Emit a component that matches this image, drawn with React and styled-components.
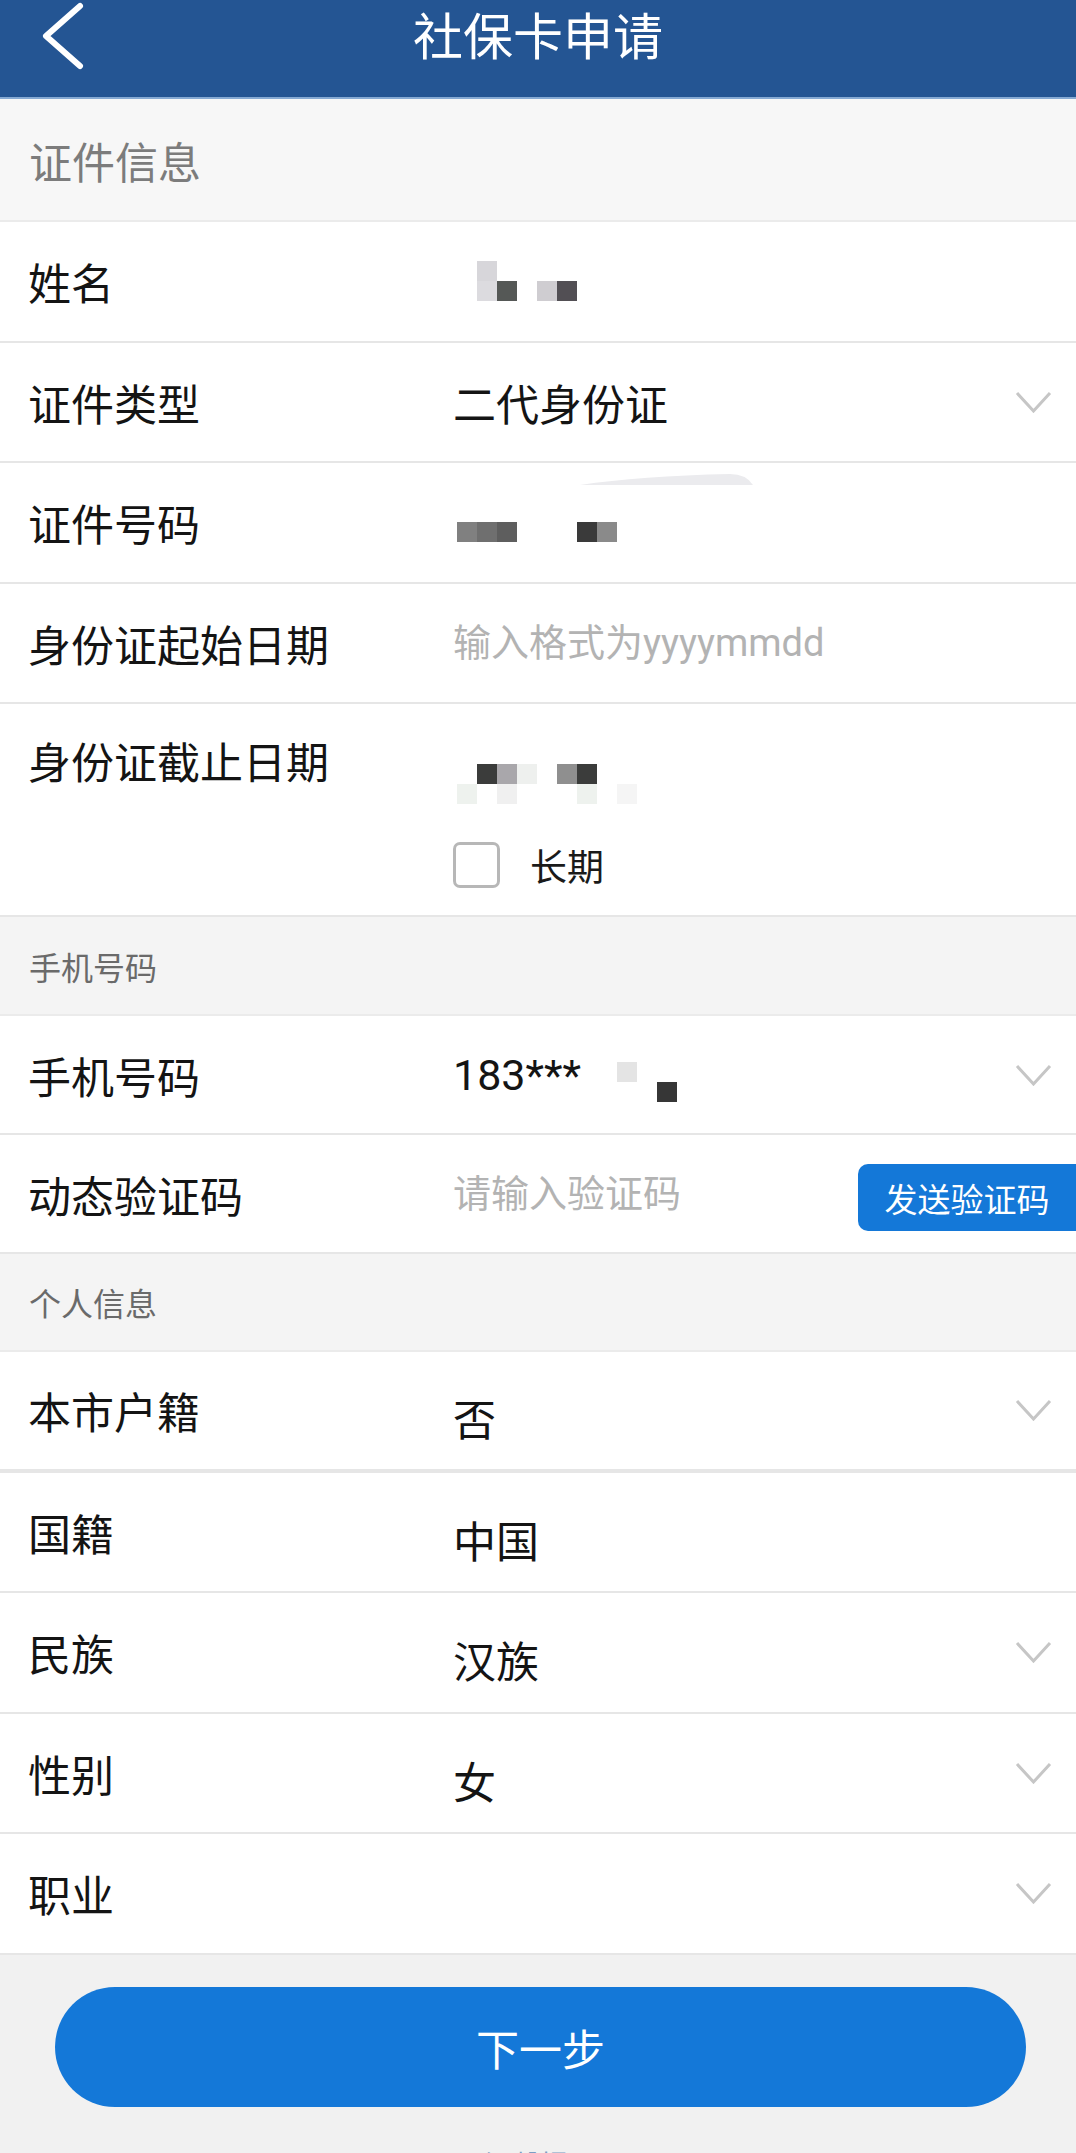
import React from 'react';
import styled, { createGlobalStyle } from 'styled-components';

const GlobalStyle = createGlobalStyle`
  body {
    margin: 0;
    background: #f1f1f1;
    font-family: Roboto, "Noto Sans CJK SC", sans-serif;
  }
`;

const Page = styled.div`
  width: 1076px;
  background: #f1f1f1;
`;

const Header = styled.header`
  height: 97px;
  background: #245593;
  border-bottom: 2px solid #86aad3;
  display: grid;
  grid-template-columns: 1fr auto 1fr;
  align-items: start;
`;

const Back = styled.svg`
  margin-left: 40px;
  width: 48px;
  height: 72px;
`;

const Title = styled.h1`
  margin: 0;
  font-size: 50px;
  font-weight: 400;
  color: #fff;
  line-height: 76px;
`;

const SectionHead = styled.div`
  height: ${p => p.$h}px;
  box-sizing: border-box;
  display: flex;
  align-items: center;
  padding-left: 29px;
  background: ${p => (p.$big ? '#f7f7f7' : '#f4f4f4')};
  color: ${p => (p.$big ? '#7c7c7c' : '#6a6a6a')};
  font-size: ${p => (p.$big ? 43 : 32)}px;
  border-bottom: 2px solid #ebebeb;
`;

const Row = styled.div`
  position: relative;
  display: flex;
  align-items: ${p => (p.$top ? 'flex-start' : 'center')};
  height: ${p => p.$h || 120.5}px;
  box-sizing: border-box;
  background: #fff;
  border-bottom: ${p => (p.$thick ? 4 : 2)}px solid #e6e6e6;
  padding: 0 ${p => (p.$flush ? 0 : 24)}px 0 28px;
`;

const Label = styled.div`
  width: 425px;
  flex-shrink: 0;
  font-size: 43px;
  color: #141414;
  line-height: ${p => (p.$line ? '120px' : 'normal')};
`;

const Value = styled.div`
  flex: 1;
  display: flex;
  align-items: center;
  font-size: 43px;
  color: #141414;
  padding-top: ${p => (p.$drop ? 14 : 0)}px;
`;

const ValueCol = styled.div`
  flex: 1;
  display: flex;
  flex-direction: column;
`;

const Line = styled.div`
  height: 120px;
  display: flex;
  align-items: center;
`;

const CheckLine = styled.label`
  height: 82px;
  display: flex;
  align-items: center;
`;

const Box = styled.span`
  width: 47px;
  height: 46px;
  box-sizing: border-box;
  border: 3px solid #b7b7b7;
  border-radius: 7px;
`;

const CheckText = styled.span`
  margin-left: 30px;
  font-size: 37px;
  color: #1a1a1a;
`;

const Field = styled.input`
  flex: 1;
  min-width: 0;
  border: none;
  outline: none;
  padding: 0;
  background: transparent;
  font-family: inherit;
  font-size: 38px;
  color: #141414;
  &::placeholder {
    color: #b3b3b3;
  }
`;

const Mosaic = styled.div`
  display: grid;
  grid-template-columns: repeat(${p => p.$cols}, 20px);
  grid-auto-rows: 20px;
  margin-left: ${p => p.$left || 0}px;
  margin-top: ${p => p.$top || 0}px;
`;

const Cell = styled.span`
  background: ${p => p.$c || 'transparent'};
`;

const Chevron = styled.svg`
  margin-left: auto;
  width: 37px;
  height: 22px;
  flex-shrink: 0;
`;

const Swoosh = styled.svg`
  position: absolute;
  left: 580px;
  top: 10px;
  width: 175px;
  height: 13px;
`;

const SendButton = styled.button`
  margin-left: auto;
  width: 218px;
  height: 67px;
  margin-top: 8px;
  border: none;
  border-radius: 10px 0 0 10px;
  background: #1478d8;
  color: #fff;
  font-family: inherit;
  font-size: 33px;
  padding: 0;
`;

const Footer = styled.div`
  padding: 32px 50px 0 55px;
  display: flex;
  flex-direction: column;
  align-items: stretch;
`;

const NextButton = styled.button`
  height: 120px;
  border: none;
  border-radius: 60px;
  background: #1478d8;
  color: #fff;
  font-family: inherit;
  font-size: 43px;
`;

const Tip = styled.div`
  margin-top: 37px;
  text-align: center;
  font-size: 28px;
  color: #7c9dc4;
`;

const Arrow = () => (
  <Chevron viewBox="0 0 37 22">
    <polyline points="2,2 18.5,20 35,2" fill="none" stroke="#c6c6c6" strokeWidth="3" />
  </Chevron>
);

const Pixels = ({ rows, left, top }) => (
  <Mosaic $cols={rows[0].length} $left={left} $top={top}>
    {rows.flat().map((c, i) => (
      <Cell key={i} $c={c} />
    ))}
  </Mosaic>
);

const _ = null;

const nameRows = [
  [_, '#d7d6da', _, _, _, _],
  [_, '#dcdbdf', '#555856', _, '#cfcdd1', '#524f54'],
];

const idRows = [
  [_, _, _, _, _, _, _, _],
  ['#808080', '#6f6f6f', '#5e5e5e', _, _, _, '#3a3a3a', '#8a8a8a'],
];

const expiryRows = [
  [_, _, _, _, _, _, _, _, _],
  [_, _, _, _, _, _, _, _, _],
  [_, '#3b3c3b', '#a9a7ab', '#eef0ee', _, '#8f8f8f', '#3b3c3b', _, _],
  ['#eef2ee', _, '#f0f0f0', _, _, _, '#eef2ee', _, '#f5f5f5'],
];

const phoneRows = [
  ['#e4e4e4', _, _],
  [_, _, '#363636'],
];

const personal = [
  { label: '本市户籍', value: '否', select: true, thick: true },
  { label: '国籍', value: '中国' },
  { label: '民族', value: '汉族', select: true },
  { label: '性别', value: '女', select: true },
  { label: '职业', value: '', select: true },
];

const App = () => {
  return (
    <Page>
      <GlobalStyle />
      <Header>
        <Back viewBox="0 0 48 72">
          <polyline points="40,6 6,36 40,66" fill="none" stroke="#fff" strokeWidth="6" strokeLinecap="round" strokeLinejoin="round" />
        </Back>
        <Title>社保卡申请</Title>
        <div />
      </Header>

      <SectionHead $h={123} $big>证件信息</SectionHead>

      <Row>
        <Label>姓名</Label>
        <Value>
          <Pixels rows={nameRows} left={4} />
        </Value>
      </Row>
      <Row>
        <Label>证件类型</Label>
        <Value>二代身份证</Value>
        <Arrow />
      </Row>
      <Row>
        <Swoosh viewBox="0 0 175 13">
          <path d="M0 12 Q 60 3 150 1 Q 166 1 173 12 Z" fill="#ebebee" />
        </Swoosh>
        <Label>证件号码</Label>
        <Value>
          <Pixels rows={idRows} left={4} />
        </Value>
      </Row>
      <Row>
        <Label>身份证起始日期</Label>
        <Field placeholder="输入格式为yyyymmdd" />
      </Row>
      <Row $h={213} $top>
        <Label $line>身份证截止日期</Label>
        <ValueCol>
          <Line>
            <Pixels rows={expiryRows} left={4} />
          </Line>
          <CheckLine>
            <Box />
            <CheckText>长期</CheckText>
          </CheckLine>
        </ValueCol>
      </Row>

      <SectionHead $h={99}>手机号码</SectionHead>

      <Row $h={119}>
        <Label>手机号码</Label>
        <Value>
          183***
          <Pixels rows={phoneRows} left={36} top={14} />
        </Value>
        <Arrow />
      </Row>
      <Row $h={119} $flush>
        <Label>动态验证码</Label>
        <Field placeholder="请输入验证码" />
        <SendButton>发送验证码</SendButton>
      </Row>

      <SectionHead $h={98}>个人信息</SectionHead>

      {personal.map(item => (
        <Row key={item.label} $thick={item.thick}>
          <Label>{item.label}</Label>
          <Value $drop>{item.value}</Value>
          {item.select && <Arrow />}
        </Row>
      ))}

      <Footer>
        <NextButton>下一步</NextButton>
        <Tip>温馨提示</Tip>
      </Footer>
    </Page>
  );
};

export default App;
